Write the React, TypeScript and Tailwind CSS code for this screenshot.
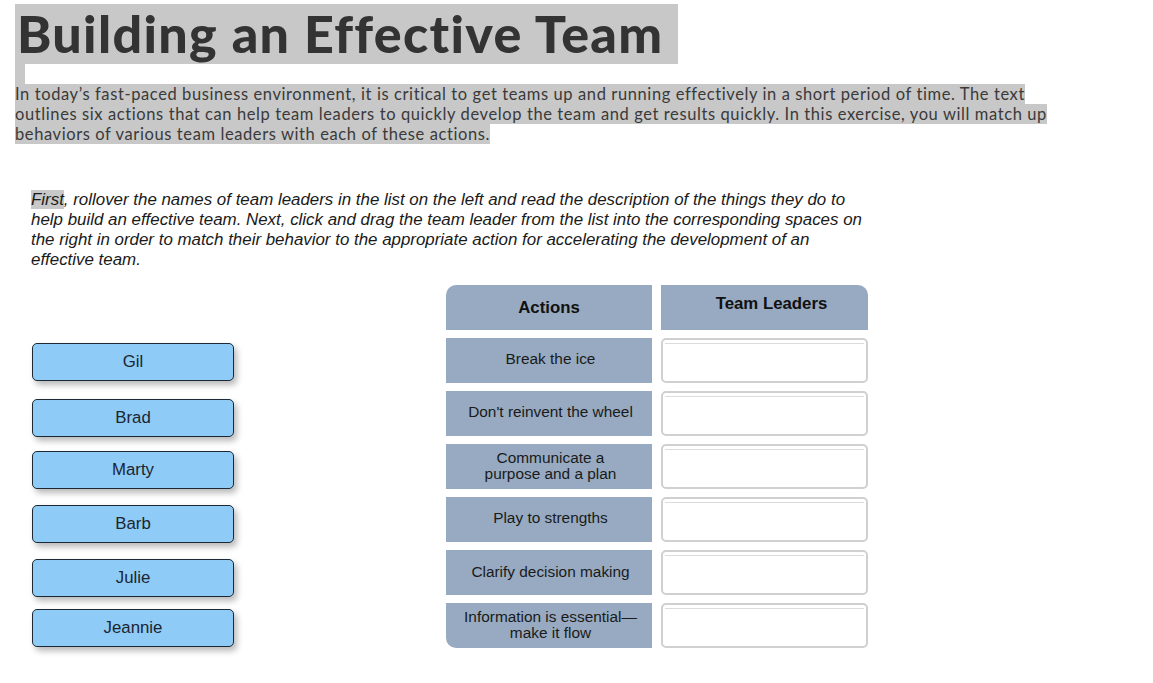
import React from "react";

const names = ["Gil", "Brad", "Marty", "Barb", "Julie", "Jeannie"];
const nameGaps = ["", "mt-[18px]", "mt-[14px]", "mt-[16px]", "mt-[16px]", "mt-[12px]"];

const actions: React.ReactNode[] = [
  "Break the ice",
  "Don't reinvent the wheel",
  <>Communicate a<br />purpose and a plan</>,
  "Play to strengths",
  "Clarify decision making",
  <>Information is essential—<br />make it flow</>,
];
const actionPad = ["pb-[4px]", "pb-[4px]", "pb-[2px]", "pb-[4px]", "pb-[2px]", "pb-[2px]"];

export default function App() {
  const sans = { fontFamily: "Lato, 'Open Sans', sans-serif" };
  return (
    <div className="w-[1153px] h-[683px] bg-white relative overflow-hidden text-[#333]">
      {/* Title */}
      <div className="pl-[15px] pt-[4px]">
        <div className="w-[663px] h-[60px] bg-[#c8c8c8] flex items-center pl-[2px]">
          <h1 className="text-[52px] leading-none font-black text-[#333] tracking-[1.3px] mt-[-3px]" style={sans}>
            Building an Effective Team
          </h1>
        </div>
        <div className="w-[10px] h-[20px] bg-[#c8c8c8]" />
      </div>
      {/* Intro paragraph */}
      <p className="pl-[15px] mt-[0px] text-[16.5px] leading-[20px] text-[#3a3a3a] tracking-[0.6px]" style={sans}>
        <span className="bg-[#c8c8c8]">In today’s fast-paced business environment, it is critical to get teams up and running effectively in a short period of time. The text </span>
        <br />
        <span className="bg-[#c8c8c8]">outlines six actions that can help team leaders to quickly develop the team and get results quickly. In this exercise, you will match up </span>
        <br />
        <span className="bg-[#c8c8c8]">behaviors of various team leaders with each of these actions. </span>
      </p>
      {/* Instructions */}
      <p
        className="pl-[31px] mt-[46px] text-[16.9px] leading-[20px] italic text-[#1a1a1a]"
        style={{ fontFamily: "'Liberation Sans', Arial, sans-serif" }}
      >
        <span className="bg-[#c8c8c8]">First</span>, rollover the names of team leaders in the list on the left and read the description of the things they do to
        <br />
        help build an effective team. Next, click and drag the team leader from the list into the corresponding spaces on
        <br />
        the right in order to match their behavior to the appropriate action for accelerating the development of an
        <br />
        effective team.
      </p>

      {/* Activity area */}
      <div className="flex mt-[15px]" style={{ fontFamily: "'Liberation Sans', Arial, sans-serif" }}>
        {/* Names list */}
        <div className="w-[446px] pl-[32px] pt-[58px]">
          <div className="flex flex-col">
            {names.map((n, i) => (
              <div
                key={n}
                className={
                  "w-[202px] h-[38px] bg-[#8ecbf6] border border-[#1d2a36] rounded-[5px] flex items-center justify-center text-[16.8px] text-[#1b2530] shadow-[3px_4px_6px_rgba(0,0,0,0.28)] " +
                  nameGaps[i]
                }
              >
                {n}
              </div>
            ))}
          </div>
        </div>
        {/* Table */}
        <div className="flex flex-col gap-[8px]">
          <div className="flex gap-[9px]">
            <div className="w-[206px] h-[45px] bg-[#97aac1] rounded-tl-[10px] flex items-center justify-center text-[16.8px] font-bold text-[#111] pt-[1px]">
              Actions
            </div>
            <div className="w-[207px] h-[45px] bg-[#97aac1] rounded-tr-[10px] flex justify-center text-[16.8px] font-bold text-[#111] pt-[6px] pl-[14px]">
              Team Leaders
            </div>
          </div>
          {actions.map((a, i) => (
            <div key={i} className="flex gap-[9px]">
              <div
                className={
                  "w-[206px] h-[45px] bg-[#97aac1] flex items-center justify-center text-center text-[15.4px] leading-[16px] text-[#1a1a1a] pl-[3px] " +
                  actionPad[i] +
                  (i === 5 ? " rounded-bl-[10px]" : "")
                }
              >
                {a}
              </div>
              <div className="w-[207px] h-[45px] bg-white border-2 border-[#d0d0d0] rounded-[5px] relative">
                <div className="absolute left-[2px] right-[2px] top-[3px] h-[1px] bg-[#dcdcdc]" />
              </div>
            </div>
          ))}
        </div>
      </div>
    </div>
  );
}
